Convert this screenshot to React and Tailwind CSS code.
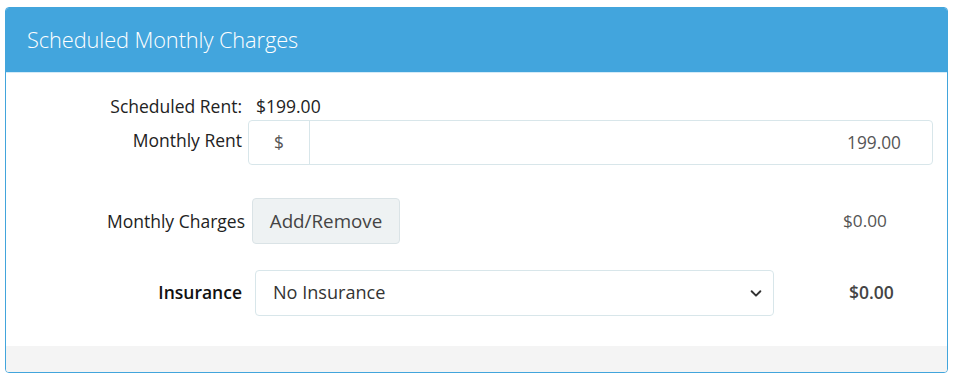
export default function App() {
  return (
    <div className="bg-white w-[953px] h-[382px] pt-[7px] pl-[5px] font-['Open_Sans',sans-serif]">
      <div className="w-[943px] h-[366px] border border-[#42a5dc] rounded-[4px] overflow-hidden flex flex-col">
        {/* Header */}
        <div className="h-[65px] bg-[#42a5dd] border-b border-[#d4ebf8] flex items-center pl-[21px] shrink-0">
          <h2 className="text-[21.8px] font-light text-white tracking-[-0.1px]">Scheduled Monthly Charges</h2>
        </div>

        {/* Body */}
        <div className="flex-1 pt-[21px] text-[17.5px] text-[#222]">
          <div className="flex items-center h-[24px]">
            <div className="w-[236px] text-right">Scheduled Rent:</div>
            <div className="ml-[14px]">$199.00</div>
          </div>

          <div className="flex items-start mt-[2px]">
            <div className="w-[236px] text-right pt-[7px]">Monthly Rent</div>
            <div className="ml-[6px] w-[685px] h-[45px] flex border border-[#d8e6ea] rounded-[4px] text-[17.3px] text-[#555]">
              <div className="w-[61px] flex items-center justify-center border-r border-[#d8e6ea]">$</div>
              <div className="flex-1 flex items-center justify-end pr-[31px]">199.00</div>
            </div>
          </div>

          <div className="flex items-center mt-[33px]">
            <div className="w-[239px] text-right">Monthly Charges</div>
            <button className="ml-[7px] w-[148px] h-[46px] bg-[#eef2f3] border border-[#dae3e6] rounded-[4px] text-[18.8px] text-[#444]">
              Add/Remove
            </button>
            <div className="ml-[443px] text-[17.2px] text-[#555]">$0.00</div>
          </div>

          <div className="flex items-center mt-[26px]">
            <div className="w-[236px] text-right font-semibold text-[#111] -mt-[2px]">Insurance</div>
            <div className="ml-[13px] w-[519px] h-[46px] flex items-center justify-between border border-[#d8e6ea] rounded-[4px] pl-[17px] pr-[10px] text-[18.1px] text-[#333]">
              <span>No Insurance</span>
              <svg width="14" height="14" viewBox="0 0 16 16" fill="none" stroke="#333" strokeWidth="2.2" strokeLinecap="round" strokeLinejoin="round">
                <path d="M3 6l5 5 5-5" />
              </svg>
            </div>
            <div className="ml-[75px] font-semibold text-[#444] -mt-[2px]">$0.00</div>
          </div>
        </div>

        {/* Footer */}
        <div className="h-[26px] bg-[#f4f4f4] shrink-0" />
      </div>
    </div>
  );
}
